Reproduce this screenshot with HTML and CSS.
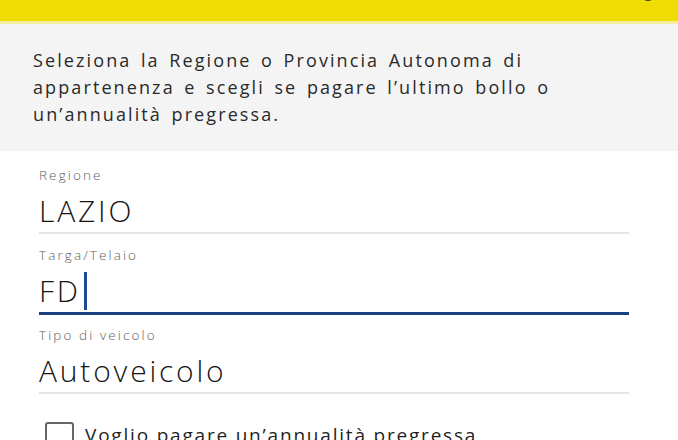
FILE: index.html
```html
<!DOCTYPE html>
<html lang="it">
<head>
<meta charset="utf-8">
<title>Bollo auto</title>
<link rel="stylesheet" href="styles.css">
</head>
<body>
<header class="topbar">
  <svg class="top-icon" width="16" height="16" viewBox="0 0 16 16" aria-hidden="true"><circle cx="8" cy="8" r="7" fill="#3a3a1a"/></svg>
</header>
<section class="intro">
  <p class="intro-text">Seleziona la Regione o Provincia Autonoma di appartenenza e scegli se pagare l’ultimo bollo o un’annualità pregressa.</p>
</section>
<form class="form">
  <div class="field">
    <div class="field-label">Regione</div>
    <div class="field-value">LAZIO</div>
  </div>
  <div class="field field-active">
    <div class="field-label">Targa/Telaio</div>
    <div class="field-value">FD<span class="caret"></span></div>
  </div>
  <div class="field">
    <div class="field-label">Tipo di veicolo</div>
    <div class="field-value">Autoveicolo</div>
  </div>
  <label class="check">
    <span class="check-box"></span>
    <span class="check-text">Voglio pagare un’annualità pregressa</span>
  </label>
</form>
</body>
</html>
```
FILE: styles.css
```css
html, body {
  margin: 0;
  padding: 0;
  background: #ffffff;
  font-family: "Open Sans", "Noto Sans", sans-serif;
  color: #1f1f1f;
  overflow: hidden;
}
.topbar {
  height: 21px;
  background: #f0dc00;
  border-bottom: 3px solid #f7efa0;
  display: flex;
  justify-content: flex-end;
  align-items: flex-end;
  overflow: hidden;
  padding-right: 22px;
}
.top-icon {
  margin-bottom: 19px;
}
.intro {
  background: #f4f4f4;
  padding: 23px 33px 23px;
}
.intro-text {
  margin: 0;
  font-size: 18px;
  line-height: 27px;
  letter-spacing: 2.1px;
  word-spacing: 2.8px;
  color: #2a2a2a;
  font-weight: 400;
  max-width: 560px;
}
.form {
  padding: 16px 49px 0 39px;
}
.field {
  border-bottom: 2px solid #e6e6e6;
  margin-bottom: 13px;
}
.field-active {
  border-bottom: 3px solid #1c3f82;
  margin-bottom: 12px;
}
.field-label {
  font-size: 13.5px;
  line-height: 16px;
  color: #5e5e5e;
  letter-spacing: 2.1px;
  font-weight: 300;
}
.field-value {
  padding-top: 6px;
  height: 43px;
  line-height: 43px;
  font-size: 30px;
  letter-spacing: 2.8px;
  color: #141414;
  font-weight: 300;
  display: flex;
  align-items: center;
}
.caret {
  display: inline-block;
  width: 3px;
  height: 38px;
  margin-left: 3px;
  background: #1c4a8e;
}
.check {
  display: flex;
  align-items: flex-start;
  gap: 11px;
  padding-top: 15px;
  padding-left: 6px;
}
.check-box {
  width: 25px;
  height: 25px;
  border: 2px solid #666;
  border-radius: 3px;
  flex: none;
}
.check-text {
  font-size: 19px;
  line-height: 24px;
  letter-spacing: 1.8px;
  color: #1f1f1f;
  font-weight: 400;
  padding-top: 1px;
}
```
